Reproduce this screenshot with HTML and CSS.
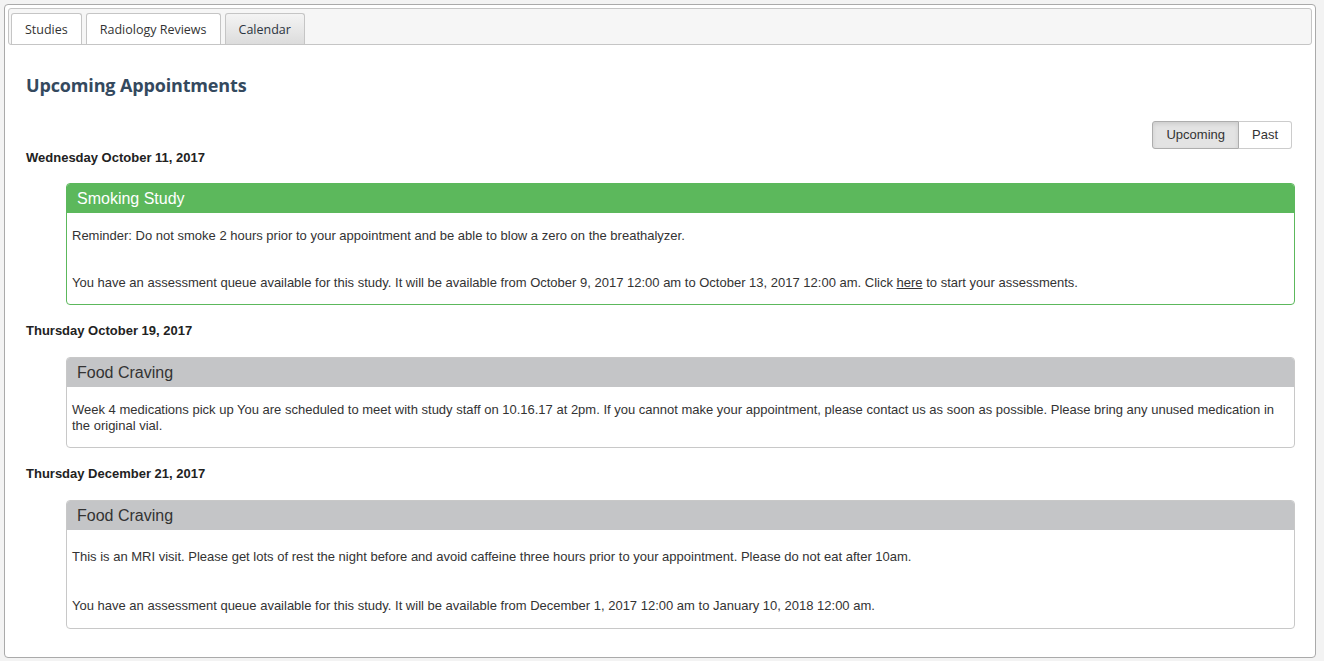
FILE: index.html
```html
<!DOCTYPE html>
<html lang="en">
<head>
    <meta charset="UTF-8">
    <meta name="viewport" content="width=device-width, initial-scale=1.0">
    <title>Calendar</title>
    <link rel="stylesheet" href="styles.css">
</head>
<body>
    <div class="tabs">
        <!-- Barra de abas -->
        <ul class="tab-nav">
            <li class="tab"><a href="#">Studies</a></li>
            <li class="tab"><a href="#">Radiology Reviews</a></li>
            <li class="tab active"><a href="#">Calendar</a></li>
        </ul>

        <div class="tab-panel">
            <h2 class="page-title">Upcoming Appointments</h2>

            <div class="toolbar">
                <div class="btn-group">
                    <button class="btn active">Upcoming</button>
                    <button class="btn">Past</button>
                </div>
            </div>

            <!-- Dia 1 -->
            <div class="day first">Wednesday October 11, 2017</div>
            <div class="card green">
                <div class="card-head">Smoking Study</div>
                <div class="card-body">
                    <p>Reminder: Do not smoke 2 hours prior to your appointment and be able to blow a zero on the breathalyzer.</p>
                    <p>You have an assessment queue available for this study. It will be available from October 9, 2017 12:00 am to October 13, 2017 12:00 am. Click <a href="#">here</a> to start your assessments.</p>
                </div>
            </div>

            <!-- Dia 2 -->
            <div class="day">Thursday October 19, 2017</div>
            <div class="card gray">
                <div class="card-head">Food Craving</div>
                <div class="card-body">
                    <p>Week 4 medications pick up You are scheduled to meet with study staff on 10.16.17 at 2pm. If you cannot make your appointment, please contact us as soon as possible. Please bring any unused medication in the original vial.</p>
                </div>
            </div>

            <!-- Dia 3 -->
            <div class="day">Thursday December 21, 2017</div>
            <div class="card gray">
                <div class="card-head">Food Craving</div>
                <div class="card-body tall">
                    <p>This is an MRI visit. Please get lots of rest the night before and avoid caffeine three hours prior to your appointment. Please do not eat after 10am.</p>
                    <p>You have an assessment queue available for this study. It will be available from December 1, 2017 12:00 am to January 10, 2018 12:00 am.</p>
                </div>
            </div>
        </div>
    </div>
</body>
</html>
```

FILE: styles.css
```css
body {
    margin: 0;
    padding: 4px 8px 4px 4px;
    background-color: #f3f3f3;
    font-family: "Liberation Sans", Arial, sans-serif;
    color: #333;
}

/* Container das abas */
.tabs {
    background-color: #fff;
    border: 1px solid #aaa;
    border-radius: 4px;
    padding: 3px;
}

.tab-nav {
    list-style: none;
    margin: 0;
    padding: 4px 2px 0;
    display: flex;
    gap: 4px;
    background-color: #f6f6f6;
    border: 1px solid #c5c5c5;
    border-radius: 3px;
    height: 31px;
}

.tab {
    border: 1px solid #c5c5c5;
    border-bottom: none;
    border-top-left-radius: 3px;
    border-top-right-radius: 3px;
    background-color: #fff;
}

.tab a {
    display: block;
    padding: 0 13px;
    line-height: 31px;
    font-family: "Open Sans", sans-serif;
    font-size: 12.5px;
    color: #333;
    text-decoration: none;
}

.tab.active {
    background: linear-gradient(#f4f4f4, #dcdcdc);
}

.tab.active a {
    color: #2b3440;
}

/* Conteúdo */
.tab-panel {
    padding: 28px 17px 7px 18px;
}

.page-title {
    margin: 0;
    font-family: "Open Sans", sans-serif;
    font-size: 18px;
    letter-spacing: -0.15px;
    line-height: 24px;
    font-weight: bold;
    color: #34495e;
}

.toolbar {
    display: flex;
    justify-content: flex-end;
    margin-top: 24px;
    margin-bottom: 1px;
    padding-right: 3px;
}

.btn-group {
    display: flex;
}

.btn {
    font-family: "Liberation Sans", Arial, sans-serif;
    font-size: 13px;
    line-height: 18px;
    padding: 4px 13px;
    background-color: #fff;
    color: #333;
    border: 1px solid #ccc;
    cursor: pointer;
}

.btn:first-child {
    border-radius: 3px 0 0 3px;
}

.btn:last-child {
    border-radius: 0 3px 3px 0;
    border-left: none;
}

.btn.active {
    background-color: #e3e3e3;
    border-color: #adadad;
    box-shadow: inset 0 2px 4px rgba(0, 0, 0, 0.1);
}

.day {
    font-size: 13px;
    line-height: 16px;
    font-weight: bold;
    color: #222;
    margin-bottom: 18px;
}

.day.first {
    margin-bottom: 17px;
}

/* Cartões de consulta */
.card {
    margin: 0 0 18px 40px;
    border: 1px solid #c8c8c8;
    border-radius: 4px;
    background-color: #fff;
}

.card-head {
    padding: 5px 10px 3px;
    line-height: 20px;
    font-size: 16px;
    border-bottom: 1px solid transparent;
    border-top-left-radius: 3px;
    border-top-right-radius: 3px;
}

.card.green {
    border-color: #5cb85c;
}

.card.green .card-head {
    background-color: #5cb85c;
    color: #fff;
}

.card.gray .card-head {
    background-color: #c4c5c7;
    color: #333;
}

.card-body {
    padding: 15px 5px 13px;
    font-size: 13px;
    line-height: 16px;
}

.card-body.tall {
    padding: 19px 5px 14px;
}

.card-body p {
    margin: 0;
}

.card-body p + p {
    margin-top: 31px;
}

.card-body.tall p + p {
    margin-top: 33px;
}

.card-body a {
    color: #333;
    text-decoration: underline;
}
```
